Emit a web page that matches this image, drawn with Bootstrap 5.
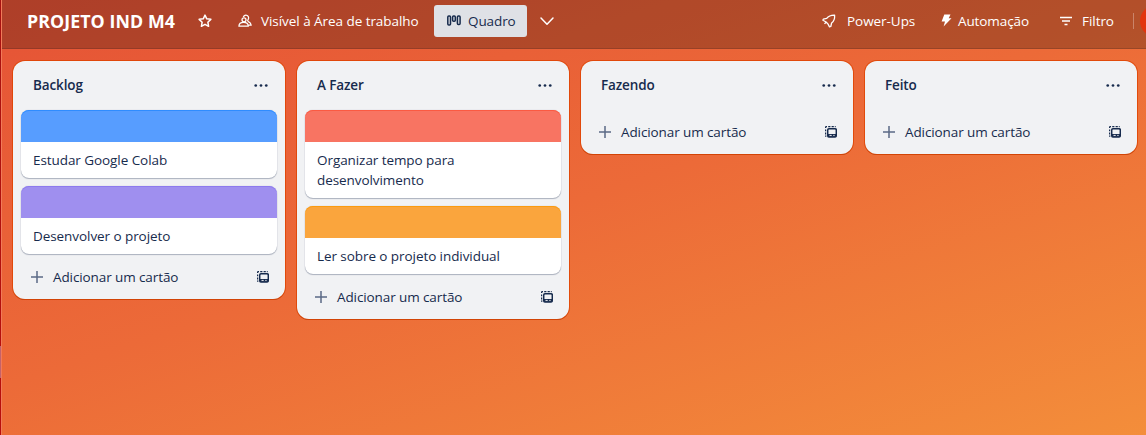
<!DOCTYPE html>
<html lang="pt-BR">
<head>
<meta charset="utf-8">
<meta name="viewport" content="width=device-width, initial-scale=1">
<title>PROJETO IND M4</title>
<link href="https://cdn.jsdelivr.net/npm/bootstrap@5.3.0/dist/css/bootstrap.min.css" rel="stylesheet">
<style>
body{font-family:"Open Sans","Noto Sans",sans-serif;font-size:13.5px;letter-spacing:-.05px;line-height:20px;color:#172b4d;height:435px;overflow:hidden;background:linear-gradient(162deg,#e34c35 -14%,#ec6a38 48%,#f69a3b 118%)}
svg{display:block;flex:none;fill:none;stroke:currentColor;stroke-width:1.5;stroke-linejoin:round}
.rail{width:2px;flex:none;background:linear-gradient(#a81210,#b80f0c);border-right:1px solid #f27a5a}
.rail-grip{height:32px;margin-top:346px;background:#c4626a}
.board-bar{height:49px;padding:0 0 7px 25px;background:rgba(0,0,0,.24);border-bottom:1px solid rgba(60,30,30,.22);color:#fff;font-weight:500}
.board-name{font-size:17.8px;font-weight:700;letter-spacing:.07px;line-height:24px;width:171px}
.bar-people{margin-left:26px;width:196px;gap:9px}
.view-btn{width:93px;height:32px;border-radius:3px;background:#dfe1e6;color:#172b4d;font-size:13.5px;line-height:20px;letter-spacing:-.1px;padding:0 0 0 13px;gap:7px}
.bar-right{width:324px;flex:none}
.bar-right>*{flex:none}
.bar-power{margin-left:11px;width:94px}
.bar-auto{margin-left:6px;width:102px;letter-spacing:-.1px}
.bar-flt{margin-left:10px;width:32px}
.bar-split{width:1px;height:16px;background:rgba(255,255,255,.3);margin-left:19px}
.avatar{width:32px;height:32px;margin-left:6px;background:#e2340d}
.board-lists{padding:12px 0 0 11px;gap:12px}
.board-list{width:272px;flex:none;background:#f1f2f4;border-radius:12px;box-shadow:0 0 0 1px rgba(222,66,0,.8),0 1px 0 0 rgba(110,50,10,.6)}
.list-head{height:48px;padding:0 16px 0 20px;font-weight:600;letter-spacing:-.13px}
.list-cards{padding:1px 8px;gap:8px}
.list-cards:empty{padding:1px 0 0}
.task{background:#fff;border-radius:8px;box-shadow:0 1px 1px rgba(9,30,66,.28),0 0 1px rgba(9,30,66,.3)}
.task-cover{height:32px;border-radius:8px 8px 0 0}
.task-text{padding:8px 40px 8px 12px;font-weight:385;letter-spacing:-.07px}
.c-blue{background:#579dff;box-shadow:inset 0 1px #2f8cff}
.c-purple{background:#9f8fef;box-shadow:inset 0 1px #8d7aee}
.c-red{background:#f87462;box-shadow:inset 0 1px #fb5a42}
.c-orange{background:#faa53d;box-shadow:inset 0 1px #fb9b10}
.list-foot{height:32px;margin:6px 16px 6px 18px;gap:10px;font-weight:385;letter-spacing:-.1px}
.list-foot svg:first-child{stroke:#5b6a85}
</style>
</head>
<body class="d-flex">
<svg width="0" height="0" class="position-absolute">
  <symbol id="dots" viewBox="0 0 14 4"><g fill="currentColor" stroke="none"><circle cx="2.400" cy="2" r="1.200"/><circle cx="7" cy="2" r="1.200"/><circle cx="11.600" cy="2" r="1.200"/></g></symbol>
  <symbol id="plus" viewBox="0 0 12 12"><path d="M6 0v12M0 6h12"/></symbol>
  <symbol id="template" viewBox="0 0 12 12"><rect x="2.700" y="2.700" width="8.600" height="8.300" rx="1.200"/><path d="M3 8h8v2.800H3z" fill="currentColor" stroke="none"/><path d="M4.500 9.400h2.200M8.300 9.400h1.300" stroke="#f1f2f4" stroke-width="1"/><path d="M.6 2V1.200Q.6.6 1.200.6H2M3.200.6h2.200M6.600.6h2.200M.6 3.400v1.800M.6 6.600v1.800M.6 9.400v.8h.8M9.800.6h.9" stroke-width="1.200"/></symbol>
</svg>
<div class="rail"><div class="rail-grip"></div></div>
<main class="flex-grow-1 overflow-hidden">
  <nav class="board-bar d-flex align-items-center">
    <div class="board-name text-nowrap">PROJETO IND M4</div>
    <svg width="14" height="14" viewBox="0 0 14 14"><path d="M7 1.100l1.750 3.750 4.100.5-3 2.850.75 4.100L7 10.300l-3.600 2 .75-4.100-3-2.850 4.100-.5z"/></svg>
    <div class="bar-people d-flex align-items-center text-nowrap">
      <svg width="14" height="14" viewBox="0 0 14 14"><g stroke-width="1.250"><circle cx="6" cy="5.800" r="2"/><path d="M.9 12.200c.1-2.400 1.900-3.800 4.700-3.800s4.600 1.400 4.700 3.800zM5.300 3C6 1.400 7.700.8 9.200 1.500c1.700.9 1.800 3 .7 4.500-.4.600-.2 1.200.5 1.600 1.500.7 2.600 1.700 2.800 3.600h-2.500"/></g></svg>
      <span>Visível à Área de trabalho</span>
    </div>
    <button class="btn view-btn border-0 d-flex align-items-center">
      <svg width="14" height="12" viewBox="0 0 14 12"><rect x=".8" y="1" width="2.700" height="9" rx="1"/><rect x="5.600" y="1" width="2.700" height="5.200" rx="1"/><rect x="10.400" y="1" width="2.700" height="8.600" rx="1"/></svg>
      <span>Quadro</span>
    </button>
    <svg class="ms-2" width="24" height="24" viewBox="0 0 24 24"><path d="M6 9l6 6.200L18 9" stroke-linecap="round"/></svg>
    <div class="bar-right d-flex align-items-center text-nowrap ms-auto">
      <svg width="14" height="14" viewBox="0 0 14 14"><path d="M12.600 1.100C9 1 6.500 1.900 4.700 4.400L1.300 5.100.9 6.300 4.100 8l1.800 1.900 1.600 3 1.300-.4.8-3.500c2.400-1.800 3.300-4.300 3-7.900zM4 8.200l-1.500 1.700" stroke-width="1.300"/></svg>
      <span class="bar-power">Power-Ups</span>
      <svg width="11" height="13" viewBox="0 0 11 13"><path d="M3.300.5h6.200L7.700 4.300h2.800L2.600 12.500l1.400-5H.6z" fill="currentColor" stroke="none"/></svg>
      <span class="bar-auto">Automação</span>
      <svg width="12" height="10" viewBox="0 0 12 10"><path d="M0 1.500h12M2 5h8M4.500 8.500h3" stroke-width="1.300"/></svg>
      <span class="bar-flt">Filtro</span>
      <i class="bar-split"></i>
      <i class="avatar rounded-circle"></i>
    </div>
  </nav>
  <div class="board-lists d-flex align-items-start" id="lists"></div>
</main>
<script>
const lists = [
  ["Backlog", [["blue", "Estudar Google Colab"], ["purple", "Desenvolver o projeto"]]],
  ["A Fazer", [["red", "Organizar tempo para desenvolvimento"], ["orange", "Ler sobre o projeto individual"]]],
  ["Fazendo", []],
  ["Feito", []]
];
document.getElementById("lists").innerHTML = lists.map(([name, cards]) => `
  <section class="board-list">
    <div class="list-head d-flex align-items-center justify-content-between"><span>${name}</span><svg width="16" height="5"><use href="#dots"/></svg></div>
    <div class="list-cards d-flex flex-column">${cards.map(([c, t]) =>
      `<div class="task"><div class="task-cover c-${c}"></div><div class="task-text">${t}</div></div>`).join("")}</div>
    <div class="list-foot d-flex align-items-center"><svg width="12" height="12"><use href="#plus"/></svg><span>Adicionar um cartão</span><svg class="ms-auto" width="12" height="12"><use href="#template"/></svg></div>
  </section>`).join("");
</script>
<script src="https://cdn.jsdelivr.net/npm/bootstrap@5.3.0/dist/js/bootstrap.bundle.min.js"></script>
</body>
</html>
